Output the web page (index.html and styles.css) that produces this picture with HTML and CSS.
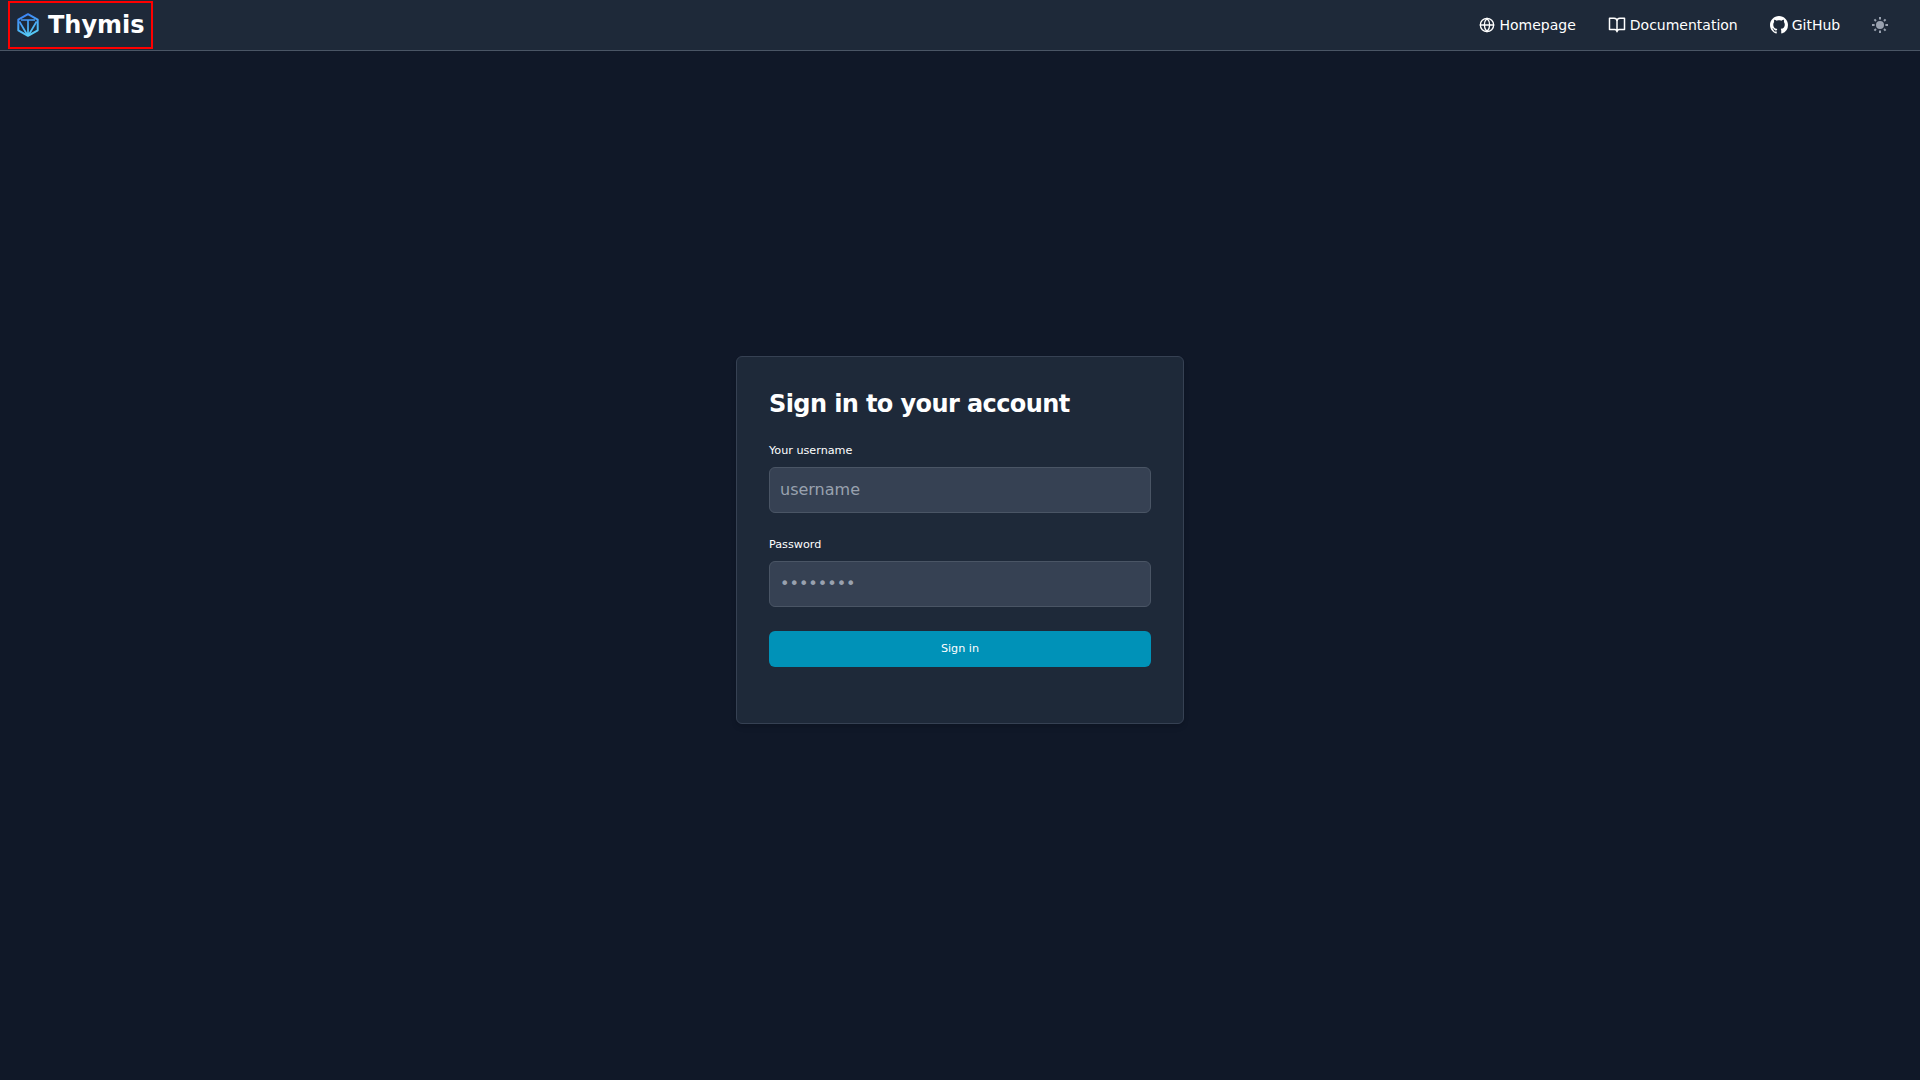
FILE: index.html
```html
<!DOCTYPE html>
<html lang="en">
<head>
<meta charset="utf-8">
<title>Thymis</title>
<link rel="stylesheet" href="styles.css">
</head>
<body>
<header class="navbar">
  <a class="brand">
    <svg class="logo" viewBox="0 0 22 24" fill="none" stroke="url(#brand-gradient)" stroke-width="2" stroke-linejoin="round">
      <defs><linearGradient id="brand-gradient" gradientUnits="userSpaceOnUse" x1="4" y1="2" x2="11" y2="23"><stop offset="0" stop-color="#3b82f6"/><stop offset="1" stop-color="#56ccf5"/></linearGradient></defs>
      <path d="M11 1.2 20.7 6.7V17.3L11 22.8 1.3 17.3V6.7Z"/>
      <path stroke-width="1.7" d="M4 7H18M11 7V22.5M2.4 8.5 10.5 22.3M19.6 8.5 11.5 22.3"/>
    </svg>
    <span class="brand-name">Thymis</span>
  </a>
  <nav class="links">
    <a class="link"><svg class="icon-globe" viewBox="0 0 24 24" fill="none" stroke="currentColor" stroke-width="2" stroke-linecap="round" stroke-linejoin="round"><circle cx="12" cy="12" r="10"/><path d="M12 2a14.5 14.5 0 0 0 0 20 14.5 14.5 0 0 0 0-20M2 12h20"/></svg>Homepage</a>
    <a class="link"><svg class="icon-book" viewBox="0 0 24 24" fill="none" stroke="currentColor" stroke-width="2" stroke-linecap="round" stroke-linejoin="round"><path d="M2 3h6a4 4 0 0 1 4 4v14a3 3 0 0 0-3-3H2zM22 3h-6a4 4 0 0 0-4 4v14a3 3 0 0 1 3-3h7z"/></svg>Documentation</a>
    <a class="link"><svg class="icon-github" viewBox="0 0 16 16" fill="currentColor"><path d="M8 0C3.58 0 0 3.58 0 8c0 3.54 2.29 6.53 5.47 7.59.4.07.55-.17.55-.38 0-.19-.01-.82-.01-1.49-2.01.37-2.53-.49-2.69-.94-.09-.23-.48-.94-.82-1.13-.28-.15-.68-.52-.01-.53.63-.01 1.08.58 1.23.82.72 1.21 1.87.87 2.33.66.07-.52.28-.87.51-1.07-1.78-.2-3.64-.89-3.64-3.95 0-.87.31-1.59.82-2.15-.08-.2-.36-1.02.08-2.12 0 0 .67-.21 2.2.82.64-.18 1.32-.27 2-.27s1.36.09 2 .27c1.53-1.04 2.2-.82 2.2-.82.44 1.1.16 1.92.08 2.12.51.56.82 1.27.82 2.15 0 3.07-1.87 3.75-3.65 3.95.29.25.54.73.54 1.48 0 1.07-.01 1.93-.01 2.2 0 .21.15.46.55.38A8.01 8.01 0 0 0 16 8c0-4.42-3.58-8-8-8"/></svg>GitHub</a>
    <button class="theme" aria-label="Toggle theme"><svg class="icon-sun" viewBox="0 0 16 16" fill="currentColor"><circle cx="8" cy="8" r="4"/><path stroke="currentColor" stroke-width="2" d="M8 0v2.6M8 13.4V16M0 8h2.6M13.4 8H16M2.4 2.4l1.6 1.6M12 12l1.6 1.6M13.6 2.4 12 4M4 12l-1.6 1.6"/></svg></button>
  </nav>
</header>
<main class="page">
  <form class="card">
    <h1 class="title">Sign in to your account</h1>
    <label class="label" for="username">Your username</label>
    <input class="field" id="username" type="text" placeholder="username">
    <label class="label" for="password">Password</label>
    <input class="field" id="password" type="password" placeholder="••••••••">
    <button class="submit" type="button">Sign in</button>
  </form>
</main>
</body>
</html>
```
FILE: styles.css
```css
* { box-sizing: border-box; }
body {
  display: flex;
  flex-direction: column;
  height: 100vh;
  margin: 0;
  overflow: hidden;
  background: #101828;
  color: #fff;
  font-family: "DejaVu Sans", sans-serif;
}
.navbar {
  display: flex;
  flex: none;
  align-items: center;
  justify-content: space-between;
  height: 51px;
  padding: 0 28px 0 8px;
  background: #1e2939;
  border-bottom: 1px solid #4a5565;
}
.brand {
  display: flex;
  align-items: center;
  gap: 9px;
  width: 145px;
  height: 48px;
  padding-left: 7px;
  border: 2px solid #f00;
}
.logo { width: 22px; height: 24px; }
.brand-name { font-size: 24px; font-weight: 700; line-height: 32px; }
.links { display: flex; align-items: center; gap: 32px; }
.link {
  display: flex;
  align-items: center;
  gap: 4px;
  font-size: 14px;
  line-height: 20px;
}
.icon-globe { width: 16px; height: 16px; }
.icon-book { width: 18px; height: 18px; }
.icon-github { width: 18px; height: 18px; }
.theme {
  display: flex;
  padding: 4px;
  margin-left: -4.25px;
  border: 0;
  background: none;
  color: #99a1af;
}
.icon-sun { width: 16px; height: 16px; }
.page {
  display: flex;
  flex: 1;
  align-items: center;
  justify-content: center;
  padding-bottom: 51px;
}
.card {
  display: flex;
  flex-direction: column;
  width: 448px;
  height: 368px;
  padding: 32px;
  background: #1e2939;
  border: 1px solid #364153;
  border-radius: 6px;
  box-shadow: 0 4px 6px -1px rgb(0 0 0 / 10%), 0 2px 4px -2px rgb(0 0 0 / 10%);
}
.title { margin: 0 0 24px; font-size: 24px; font-weight: 700; line-height: 30px; letter-spacing: -0.6px; }
.label { margin-bottom: 8px; font-size: 11.2px; line-height: 16px; }
.field {
  width: 100%;
  height: 46px;
  margin: 0 0 24px;
  padding: 0 10px 2px;
  background: #364153;
  border: 1px solid #4a5565;
  border-radius: 6px;
  color: #fff;
  font: 16px/24px "DejaVu Sans", sans-serif;
}
.field::placeholder { color: #99a1af; opacity: 1; }
.submit {
  height: 36px;
  padding: 0;
  background: #0092b8;
  border: 0;
  border-radius: 6px;
  color: #fff;
  font: 11.2px/16px "DejaVu Sans", sans-serif;
}
```
